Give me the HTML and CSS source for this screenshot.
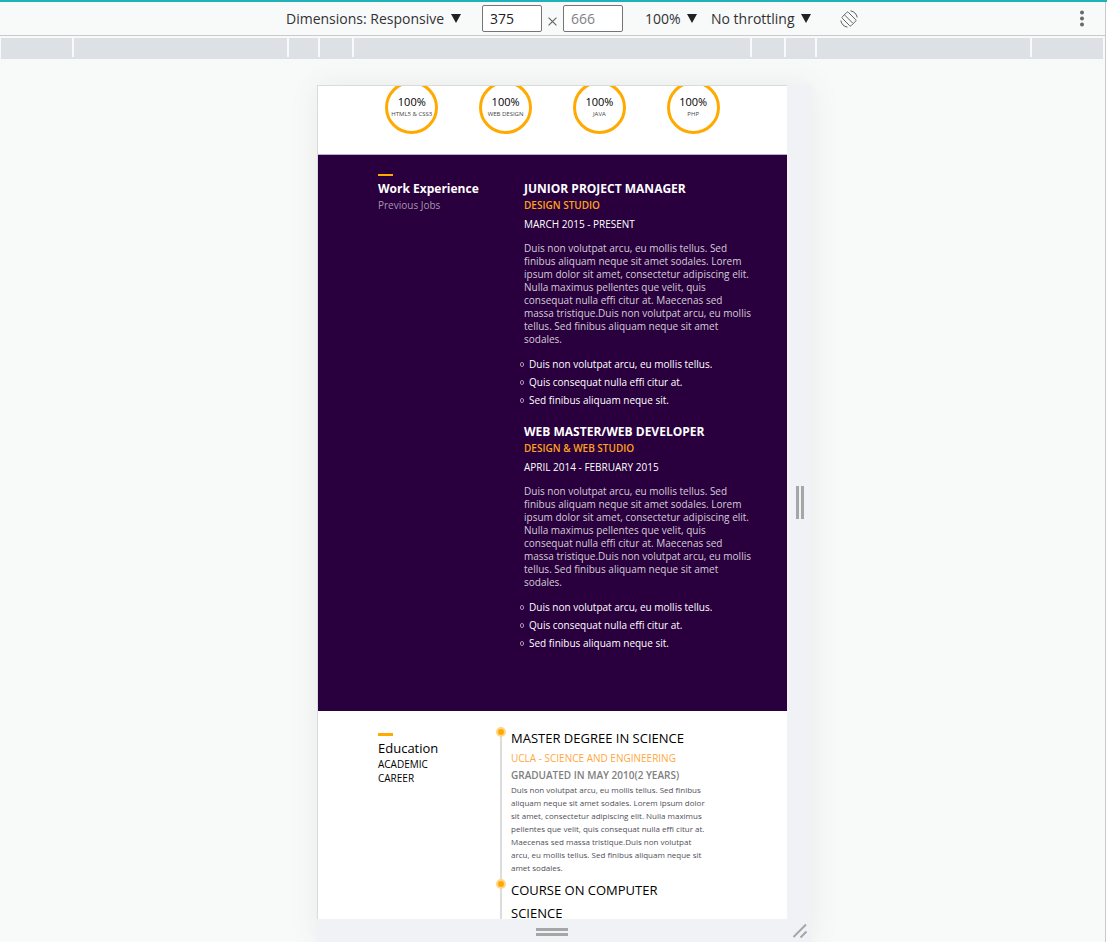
FILE: index.html
```
<!DOCTYPE html>
<html lang="en">
<head>
<meta charset="utf-8">
<title>Responsive preview</title>
<link rel="stylesheet" href="styles.css">
</head>
<body>
<div class="workspace">
  <header class="toolbar">
    <label class="picker picker-device">
      <select aria-label="Dimensions"><option>Dimensions: Responsive</option></select>
      <svg class="caret" viewBox="0 0 10 9" aria-hidden="true"><path d="M0 0h10L5 9z"/></svg>
    </label>
    <input class="size" type="text" value="375" aria-label="Width">
    <svg class="times" viewBox="0 0 8 8" aria-hidden="true"><path d="M0.5 0.5l7 7M7.5 0.5l-7 7"/></svg>
    <input class="size size-muted" type="text" value="666" aria-label="Height">
    <label class="picker picker-zoom">
      <select aria-label="Zoom"><option>100%</option></select>
      <svg class="caret" viewBox="0 0 10 9" aria-hidden="true"><path d="M0 0h10L5 9z"/></svg>
    </label>
    <label class="picker picker-throttle">
      <select aria-label="Throttling"><option>No throttling</option></select>
      <svg class="caret" viewBox="0 0 10 9" aria-hidden="true"><path d="M0 0h10L5 9z"/></svg>
    </label>
    <button class="icon-button" type="button" aria-label="Rotate">
      <svg class="rotate" viewBox="0 0 18 18" aria-hidden="true">
        <path d="M8.300 2.300l7.400 7.400q.7.700 0 1.400l-4.600 4.600q-.7.700-1.400 0L2.300 8.300q-.7-.7 0-1.400L6.900 2.300q.7-.7 1.400 0zM4.800 5.200l7.800 7.800M.8 10.500q1 5.500 6.700 6.700M17.200 7.500q-1-5.500-6.700-6.700"/>
      </svg>
    </button>
    <button class="icon-button menu-button" type="button" aria-label="More options">
      <svg class="dots" viewBox="0 0 4 17" aria-hidden="true"><circle cx="2" cy="2.500" r="2"/><circle cx="2" cy="8.500" r="2"/><circle cx="2" cy="14.500" r="2"/></svg>
    </button>
  </header>
  <div class="ruler"><i class="s1"></i><i class="s2"></i><i class="s3"></i><i class="s4"></i><i class="s5"></i><i class="s4"></i><i class="s3"></i><i class="s2"></i><i class="s1"></i></div>

  <div class="stage">
    <div class="device">
      <main class="screen">
        <section class="skills">
          <div class="skill"><b>100%</b><span>HTML5 &amp; CSS3</span></div>
          <div class="skill"><b>100%</b><span>WEB DESIGN</span></div>
          <div class="skill"><b>100%</b><span>JAVA</span></div>
          <div class="skill"><b>100%</b><span>PHP</span></div>
        </section>

        <section class="work">
          <div class="heading">
            <h2>Work Experience</h2>
            <p>Previous Jobs</p>
          </div>
          <div class="jobs">
            <article class="job">
              <h3>JUNIOR PROJECT MANAGER</h3>
              <h4>DESIGN STUDIO</h4>
              <p class="date">MARCH 2015 - PRESENT</p>
              <p class="summary">Duis non volutpat arcu, eu mollis tellus. Sed<br>
                finibus aliquam neque sit amet sodales. Lorem<br>
                ipsum dolor sit amet, consectetur adipiscing elit.<br>
                Nulla maximus pellentes que velit, quis<br>
                consequat nulla effi citur at. Maecenas sed<br>
                massa tristique.Duis non volutpat arcu, eu mollis<br>
                tellus. Sed finibus aliquam neque sit amet<br>
                sodales.</p>
              <ul>
                <li>Duis non volutpat arcu, eu mollis tellus.</li>
                <li>Quis consequat nulla effi citur at.</li>
                <li>Sed finibus aliquam neque sit.</li>
              </ul>
            </article>
            <article class="job">
              <h3>WEB MASTER/WEB DEVELOPER</h3>
              <h4>DESIGN &amp; WEB STUDIO</h4>
              <p class="date">APRIL 2014 - FEBRUARY 2015</p>
              <p class="summary">Duis non volutpat arcu, eu mollis tellus. Sed<br>
                finibus aliquam neque sit amet sodales. Lorem<br>
                ipsum dolor sit amet, consectetur adipiscing elit.<br>
                Nulla maximus pellentes que velit, quis<br>
                consequat nulla effi citur at. Maecenas sed<br>
                massa tristique.Duis non volutpat arcu, eu mollis<br>
                tellus. Sed finibus aliquam neque sit amet<br>
                sodales.</p>
              <ul>
                <li>Duis non volutpat arcu, eu mollis tellus.</li>
                <li>Quis consequat nulla effi citur at.</li>
                <li>Sed finibus aliquam neque sit.</li>
              </ul>
            </article>
          </div>
        </section>

        <section class="education">
          <div class="heading">
            <h2>Education</h2>
            <p>ACADEMIC CAREER</p>
          </div>
          <div class="timeline">
            <article class="course">
              <h3>MASTER DEGREE IN SCIENCE</h3>
              <h4>UCLA - SCIENCE AND ENGINEERING</h4>
              <p class="date">GRADUATED IN MAY 2010(2 YEARS)</p>
              <p class="summary">Duis non volutpat arcu, eu mollis tellus. Sed finibus<br>
                aliquam neque sit amet sodales. Lorem ipsum dolor<br>
                sit amet, consectetur adipiscing elit. Nulla maximus<br>
                pellentes que velit, quis consequat nulla effi citur at.<br>
                Maecenas sed massa tristique.Duis non volutpat<br>
                arcu, eu mollis tellus. Sed finibus aliquam neque sit<br>
                amet sodales.</p>
            </article>
            <article class="course">
              <h3>COURSE ON COMPUTER<br>SCIENCE</h3>
            </article>
          </div>
        </section>
      </main>
      <div class="handle handle-right"><i></i><i></i></div>
      <div class="handle handle-bottom"><i></i><i></i></div>
      <div class="handle handle-corner">
        <svg class="grip" viewBox="0 0 16 16" aria-hidden="true"><path d="M1.500 14L14 1.500M8.500 14.500L14.500 8.500"/></svg>
      </div>
    </div>
  </div>
</div>
<aside class="side-panel"></aside>
</body>
</html>
```
FILE: styles.css
```
*,
*::before {
  box-sizing: border-box;
}

body,
h2,
h3,
h4,
p,
ul {
  margin: 0;
  padding: 0;
}

body {
  display: flex;
  height: 100vh;
  overflow: hidden;
  border-top: 2px solid #20b2b8;
  background: #f8faf9;
  color: #000;
  font-family: "Open Sans", "Noto Sans", sans-serif;
}

.workspace {
  display: flex;
  flex: 1;
  flex-direction: column;
  min-width: 0;
}

.side-panel {
  width: 2px;
  border-left: 1px solid #c8cacc;
  background: #fff;
}

/* Toolbar */

.toolbar {
  display: flex;
  flex: none;
  align-items: center;
  height: 34px;
  padding: 0 16px 0 286px;
  border-bottom: 1px solid #c8cacc;
}

.picker {
  display: flex;
  align-items: center;
  gap: 6px;
}

.picker select {
  appearance: none;
  padding: 0;
  border: 0;
  background: none;
  color: #303236;
  font: 14px/20px "Open Sans", sans-serif;
}

.picker-device {
  margin-right: 21px;
}

.picker-zoom {
  margin: 0 14px 0 22px;
}

.picker-throttle {
  margin-right: 29px;
}

.caret {
  width: 10px;
  height: 9px;
  fill: #202124;
}

.size {
  width: 60px;
  height: 27px;
  padding: 0 7px;
  border: 1px solid #737578;
  border-radius: 2px;
  background: #fff;
  color: #202124;
  font: 14px/20px "Open Sans", sans-serif;
}

.size-muted {
  color: #808285;
}

.times {
  width: 9px;
  height: 9px;
  margin: 5px 6px 0;
  fill: none;
  stroke: #606266;
}

.icon-button {
  display: flex;
  padding: 0;
  border: 0;
  background: none;
}

.rotate {
  width: 18px;
  height: 18px;
  fill: none;
  stroke: #606266;
}

.menu-button {
  margin-left: auto;
  padding: 0 5px;
}

.dots {
  width: 4px;
  height: 17px;
  fill: #66686b;
}

/* Breakpoint ruler */

.ruler {
  display: flex;
  flex: none;
  height: 21px;
  margin: 2px 2px 0 1px;
  background: #dde0e5;
}

.ruler i {
  height: 19px;
  border-right: 2px solid #f8faf9;
}

.ruler i:last-child {
  border-right: 0;
}

.s1 { flex: 71; }
.s2 { flex: 213; }
.s3 { flex: 29; }
.s4 { flex: 32; }
.s5 { flex: 396; }

/* Emulated device */

.stage {
  display: grid;
  flex: 1;
  grid-template-columns: 1fr minmax(0, 471px) 1fr;
  min-height: 0;
  padding-top: 26px;
}

.device {
  display: grid;
  grid-column: 2;
  grid-template-rows: minmax(0, 1fr) 23px;
  grid-template-columns: minmax(0, 1fr) 25px;
  min-height: 0;
  margin-right: -24px;
  box-shadow: 0 0 28px #e8ebea;
}

.screen {
  overflow: hidden;
  border-top: 1px solid #dadcdc;
  border-left: 1px solid #dadcdc;
  background: #fff;
}

.handle {
  display: flex;
  align-items: center;
  justify-content: center;
  gap: 2px;
  background: #f1f2f5;
}

.handle i {
  background: #a5a6a8;
}

.handle-right i {
  width: 3px;
  height: 33px;
}

.handle-bottom {
  flex-direction: column;
  padding-top: 2px;
}

.handle-bottom i {
  width: 32px;
  height: 3px;
}

.grip {
  width: 16px;
  height: 16px;
  fill: none;
  stroke: #a5a6a8;
  stroke-width: 2;
}

/* Skills */

.skills {
  display: flex;
  justify-content: space-around;
  margin-top: -5px;
  padding: 0 10% 20px;
  border-bottom: 1px solid #b9b3c5;
}

.skill {
  display: flex;
  flex-direction: column;
  align-items: center;
  width: 53px;
  height: 53px;
  padding-top: 10px;
  border: 3px solid #ffaa00;
  border-radius: 50%;
  white-space: nowrap;
}

.skill b {
  font-size: 11px;
  font-weight: 400;
  line-height: 15px;
}

.skill span {
  color: #444;
  font-size: 6px;
  line-height: 10px;
}

/* Shared section layout */

.heading h2::before {
  display: block;
  width: 15px;
  background: #ffaa00;
  content: "";
}

.heading p {
  font-size: 10px;
  line-height: 14px;
}

/* Work experience */

.work {
  display: grid;
  grid-template-columns: 146px 1fr;
  padding: 19px 30px 59px 60px;
  background: #29003d;
  color: #fff;
}

.work h2 {
  font-size: 12px;
  font-weight: 700;
  line-height: 19px;
}

.work h2::before {
  height: 2px;
  margin-bottom: 3px;
}

.work .heading p {
  color: #a497ae;
}

.jobs {
  display: flex;
  flex-direction: column;
  gap: 13px;
  padding-top: 5px;
}

.job h3 {
  font-size: 12px;
  font-weight: 700;
  line-height: 19px;
}

.job h4 {
  color: #ffa31a;
  font-size: 10px;
  font-weight: 600;
  line-height: 15px;
}

.job .date {
  margin: 4px 0 11px;
  font-size: 10px;
  line-height: 14px;
}

.job .summary {
  margin-bottom: 9px;
  color: #d4ccd8;
  font-size: 10px;
  line-height: 13px;
}

.job ul {
  list-style: none;
}

.job li {
  display: flex;
  align-items: center;
  gap: 5px;
  margin-left: -4px;
  font-size: 10px;
  line-height: 18px;
}

.job li::before {
  width: 4px;
  height: 5px;
  border: 1px solid #a497ae;
  border-radius: 2px;
  content: "";
}

/* Education */

.education {
  display: grid;
  grid-template-columns: 122px 1fr;
  padding: 16px 70px 40px 60px;
}

.education .heading {
  max-width: 80px;
  padding-top: 6px;
}

.education h2 {
  font-size: 13px;
  font-weight: 400;
  line-height: 17px;
}

.education h2::before {
  height: 3px;
  margin-bottom: 4px;
}

.timeline {
  border-left: 2px solid #dcdcdc;
}

.course {
  position: relative;
  padding: 0 0 5px 9px;
}

.course::before {
  position: absolute;
  top: 0;
  left: -6px;
  width: 10px;
  height: 10px;
  border: 2px solid #ffd58a;
  border-radius: 50%;
  background: #ffaa00;
  content: "";
}

.course h3 {
  font-size: 13px;
  font-weight: 400;
  line-height: 23px;
}

.course h4 {
  color: #ffa83e;
  font-size: 10px;
  font-weight: 400;
  line-height: 17px;
}

.course .date {
  color: #808080;
  font-size: 10px;
  font-weight: 600;
  line-height: 16px;
}

.course .summary {
  color: #505058;
  font-size: 8px;
  line-height: 13px;
}
```
